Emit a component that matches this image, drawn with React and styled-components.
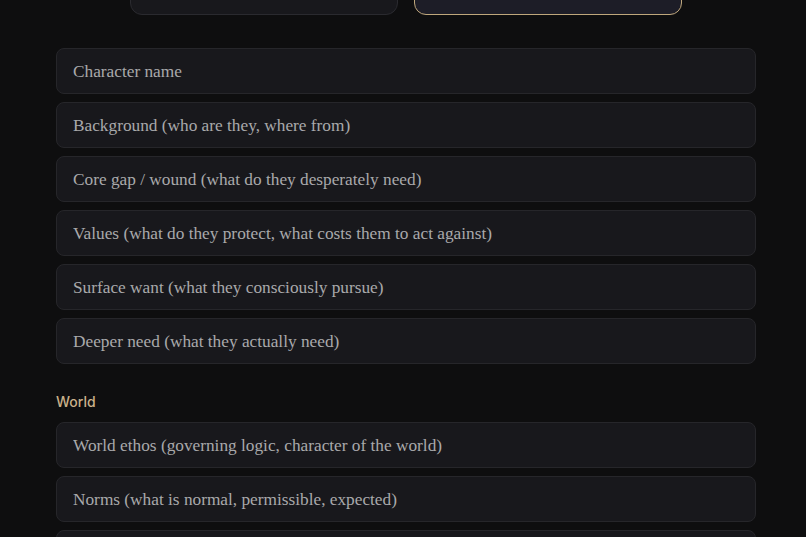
import React from 'react';
import styled, { createGlobalStyle } from 'styled-components';

const GlobalStyle = createGlobalStyle`
  html, body {
    margin: 0;
    padding: 0;
    background: #0e0e0f;
  }
  body {
    font-family: 'Liberation Serif', 'DejaVu Serif', serif;
    overflow: hidden;
  }
`;

// page is scrolled a little, so the mode buttons are cut at the top
const Page = styled.div`
  width: 700px;
  margin: -26px 0 0 56px;
  display: flex;
  flex-direction: column;
`;

const ModeRow = styled.div`
  display: flex;
  justify-content: center;
  gap: 16px;
  margin-bottom: 33px;
`;

const ModeButton = styled.button`
  width: 268px;
  height: 41px;
  border-radius: 12px;
  border: 1px solid ${p => (p.$active ? '#bfa77c' : '#2a2a2f')};
  background: ${p => (p.$active ? '#1d1d27' : '#18181c')};
  color: #d8d0c0;
  font-family: 'Liberation Serif', serif;
  font-size: 16px;
  padding: 0;
`;

const FieldList = styled.div`
  display: flex;
  flex-direction: column;
  gap: 8px;
`;

const Field = styled.input`
  box-sizing: border-box;
  width: 100%;
  height: 46px;
  padding: 2px 16px 0;
  border-radius: 8px;
  border: 1px solid #26262a;
  background: #18181c;
  color: #e0e0e0;
  font-family: 'Liberation Serif', 'DejaVu Serif', serif;
  font-size: 17.3px;
  outline: none;

  &::placeholder {
    color: #a9a9ab;
  }
`;

const SectionLabel = styled.div`
  margin: 29px 0 11px;
  font-family: Inter, 'Liberation Sans', sans-serif;
  font-size: 14px;
  font-weight: 500;
  color: #c9b08a;
  line-height: 18px;
`;

const characterFields = [
  'Character name',
  'Background (who are they, where from)',
  'Core gap / wound (what do they desperately need)',
  'Values (what do they protect, what costs them to act against)',
  'Surface want (what they consciously pursue)',
  'Deeper need (what they actually need)',
];

const worldFields = [
  'World ethos (governing logic, character of the world)',
  'Norms (what is normal, permissible, expected)',
  'Conflicts (what pressures the world)',
];

export default function App() {
  return (
    <>
      <GlobalStyle />
      <Page>
        <ModeRow>
          <ModeButton type="button" />
          <ModeButton type="button" $active />
        </ModeRow>
        <FieldList>
          {characterFields.map(label => (
            <Field key={label} placeholder={label} />
          ))}
        </FieldList>
        <SectionLabel>World</SectionLabel>
        <FieldList>
          {worldFields.map(label => (
            <Field key={label} placeholder={label} />
          ))}
        </FieldList>
      </Page>
    </>
  );
}
